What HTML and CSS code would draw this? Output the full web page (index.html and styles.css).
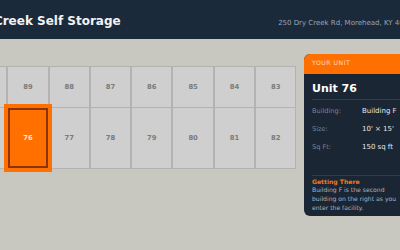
FILE: index.html
```html
<!doctype html>
<html lang="en">
 <head>
  <meta charset="UTF-8">
  <meta name="viewport" content="width=device-width, initial-scale=1.0">
  <title>Dry Creek Self Storage - Find Your Unit</title>
  <link rel="stylesheet" href="styles.css">
 </head>
 <body>
  <div class="page">
   <header class="topbar">
    <h1>Dry Creek Self Storage</h1>
    <span class="address">250 Dry Creek Rd, Morehead, KY 40351</span>
   </header>
   <main class="content">
    <div class="map">
     <div class="unit">90</div>
     <div class="unit">89</div>
     <div class="unit">88</div>
     <div class="unit">87</div>
     <div class="unit">86</div>
     <div class="unit">85</div>
     <div class="unit">84</div>
     <div class="unit">83</div>
     <div class="unit">75</div>
     <div class="unit selected">76</div>
     <div class="unit">77</div>
     <div class="unit">78</div>
     <div class="unit">79</div>
     <div class="unit">80</div>
     <div class="unit">81</div>
     <div class="unit">82</div>
    </div>
    <aside class="card">
     <div class="card-head">Your Unit</div>
     <div class="card-body">
      <h2>Unit 76</h2>
      <dl class="facts">
       <div class="fact"><dt>Building:</dt><dd>Building F</dd></div>
       <div class="fact"><dt>Size:</dt><dd>10' × 15'</dd></div>
       <div class="fact"><dt>Sq Ft:</dt><dd>150 sq ft</dd></div>
      </dl>
      <div class="directions">
       <h3>Getting There</h3>
       <p>Building F is the second building on the right as you enter the facility.</p>
      </div>
     </div>
    </aside>
   </main>
  </div>
 </body>
</html>
```

FILE: styles.css
```css
body {
    margin: 0;
    background-color: #c8c7c0;
    font-family: "DejaVu Sans", Verdana, sans-serif;
    overflow: hidden;
}
/* page is wider than the window, so it spills off both edges */
.page {
    width: 483px;
    margin-left: -50px;
}
.topbar {
    display: flex;
    justify-content: space-between;
    align-items: baseline;
    height: 39px;
    box-sizing: border-box;
    padding: 14px 16px 0;
    background-color: #1b2a3b;
}
.topbar h1 {
    margin: 0;
    font-size: 12px;
    line-height: 14px;
    color: #f2f2f2;
}
.address {
    font-size: 7px;
    color: #9aa5b3;
}
.content {
    display: flex;
    align-items: flex-start;
    gap: 7.6px;
    padding: 15px 16px;
}
.map {
    margin-top: 12px;
    display: grid;
    grid-template-columns: repeat(8, 39.3px);
    grid-template-rows: 39.7px 60px;
    column-gap: 2px;
    row-gap: 1.5px;
    padding: 1px;
    background-color: #b3b3b3;
}
.unit {
    display: flex;
    align-items: center;
    justify-content: center;
    background-color: #cfcfcf;
    font-size: 6.8px;
    font-weight: bold;
    color: #7b7b7b;
}
.unit.selected {
    z-index: 1;
    background-color: #ff7000;
    border: 2px solid #8a3400;
    box-shadow: 0 0 0 4px #ff7000;
    color: #ffe6d6;
}
.card {
    flex: none;
    width: 113px;
    border-radius: 6px;
    overflow: hidden;
    background-color: #1b2634;
}
.card-head {
    padding: 5px 8px 7px;
    background-color: #ff7000;
    font-size: 6.2px;
    line-height: 8px;
    letter-spacing: 0.5px;
    text-transform: uppercase;
    color: #ffd9c0;
}
.card-body {
    padding: 8px 8px 4px;
}
.card-body h2 {
    margin: 0;
    padding-bottom: 3px;
    border-bottom: 1px solid #2e3c4c;
    font-size: 11px;
    line-height: 14px;
    color: #ffffff;
}
.facts {
    margin: 2px 0 0;
}
.fact {
    display: flex;
    align-items: center;
    height: 18px;
}
.fact dt {
    width: 50px;
    font-size: 6.6px;
    color: #7b8592;
}
.fact dd {
    margin: 0;
    font-size: 7px;
    color: #e4e8ee;
}
.directions {
    margin-top: 19px;
    padding-top: 1.5px;
    border-top: 1px solid #2e3c4c;
}
.directions h3 {
    margin: 0;
    font-size: 6.1px;
    line-height: 8.7px;
    color: #f07a1a;
}
.directions p {
    margin: 0;
    font-size: 6.1px;
    line-height: 8.7px;
    color: #aab3bf;
}
```
